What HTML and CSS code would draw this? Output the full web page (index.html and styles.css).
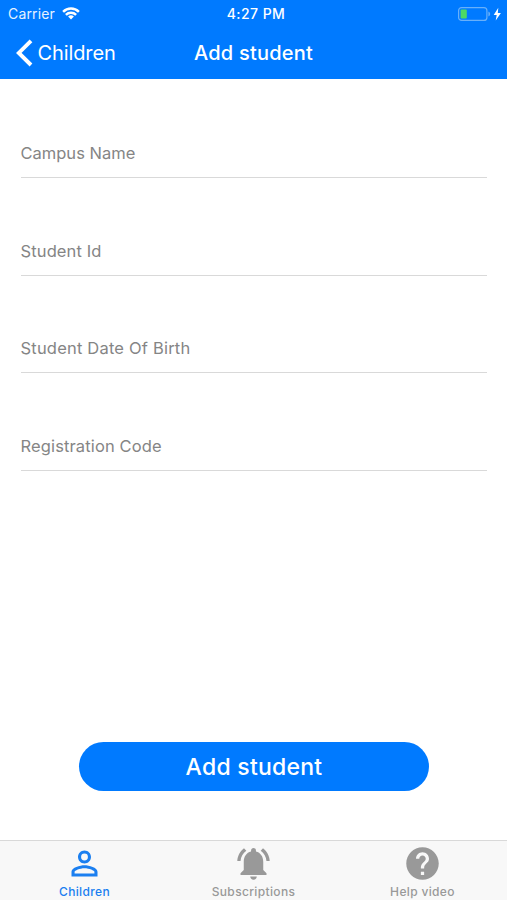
FILE: index.html
```html
<!DOCTYPE html>
<html lang="en">
<head>
<meta charset="utf-8">
<title>Add student</title>
<link rel="stylesheet" href="styles.css">
</head>
<body>
<div class="screen">
  <header class="top">
    <div class="status">
      <div class="status-left">
        <span class="carrier">Carrier</span>
        <svg class="wifi" viewBox="0 0 18 13"><g fill="none" stroke="#fff" stroke-width="2.5"><path d="M1.1 4.8a11.3 11.3 0 0 1 15.8 0"/><path d="M3.9 7.8a7.3 7.3 0 0 1 10.2 0"/></g><path d="M9 12.5L6.1 9.6a4.2 4.2 0 0 1 5.8 0z" fill="#fff"/></svg>
      </div>
      <span class="time">4:27 PM</span>
      <div class="status-right">
        <svg class="battery" viewBox="0 0 44 16"><rect x=".6" y="1.6" width="28.3" height="12.8" rx="3" fill="none" stroke="#68b0fa" stroke-width="1.2"/><rect x="2.6" y="3.4" width="6.2" height="9.2" rx="1" fill="#4cd964"/><path d="M30.4 5.5q1.8.6 1.8 2.5t-1.8 2.500z" fill="#68b0fa"/><path d="M40.3 1.800L35.700 9h3l-1 5.400 5.200-7.400h-3.100z" fill="#fff"/></svg>
      </div>
    </div>
    <nav class="navbar">
      <a class="back"><svg class="chevron" viewBox="0 0 17 28"><path d="M15 1.8L2.800 13.900 15 26" fill="none" stroke="#fff" stroke-width="3.900"/></svg><span>Children</span></a>
      <h1 class="title">Add student</h1>
    </nav>
  </header>
  <main class="form">
    <div class="field campus"><span>Campus Name</span></div>
    <div class="field"><span>Student Id</span></div>
    <div class="field birth"><span>Student Date Of Birth</span></div>
    <div class="field"><span>Registration Code</span></div>
    <button class="submit">Add student</button>
  </main>
  <footer class="tabs">
    <a class="tab active"><svg class="icon" viewBox="0 0 24 24"><path d="M12 5.9a2.1 2.1 0 1 1 0 4.2 2.1 2.1 0 0 1 0-4.2m0 9c2.97 0 6.1 1.46 6.1 2.1v1.1H5.900V17c0-.64 3.130-2.100 6.100-2.100M12 4C9.790 4 8 5.790 8 8s1.790 4 4 4 4-1.790 4-4-1.790-4-4-4zm0 9c-2.670 0-8 1.340-8 4v3h16v-3c0-2.660-5.330-4-8-4z"/></svg><span>Children</span></a>
    <a class="tab"><svg class="icon" viewBox="0 0 24 24"><path d="M7.58 4.08L6.15 2.65C3.75 4.48 2.17 7.3 2.03 10.5h2c.15-2.65 1.51-4.97 3.55-6.42zm12.39 6.42h2c-.15-3.2-1.73-6.02-4.12-7.85l-1.42 1.43c2.02 1.45 3.39 3.77 3.54 6.42zM18 11c0-3.07-1.64-5.64-4.5-6.32V4c0-.83-.67-1.5-1.5-1.5s-1.5.67-1.5 1.5v.68C7.63 5.36 6 7.92 6 11v5l-2 2v1h16v-1l-2-2v-5zm-6 11c.14 0 .27-.01.4-.04.65-.14 1.18-.58 1.44-1.18.1-.24.15-.5.15-.78h-4c.01 1.1.9 2 2.01 2z"/></svg><span>Subscriptions</span></a>
    <a class="tab"><svg class="icon" viewBox="0 0 24 24"><path d="M12 2C6.48 2 2 6.48 2 12s4.48 10 10 10 10-4.48 10-10S17.52 2 12 2zm1 17h-2v-2h2v2zm2.07-7.75l-.9.92C13.45 12.9 13 13.5 13 15h-2v-.5c0-1.1.45-2.1 1.17-2.83l1.24-1.26c.37-.36.59-.86.59-1.41 0-1.1-.9-2-2-2s-2 .9-2 2H8c0-2.21 1.79-4 4-4s4 1.79 4 4c0 .88-.36 1.68-.93 2.25z"/></svg><span>Help video</span></a>
  </footer>
</div>
</body>
</html>
```
FILE: styles.css
```css
* { box-sizing: border-box; }
body {
  margin: 0;
  background: #fff;
  font-family: Inter, "Liberation Sans", sans-serif;
}
.screen {
  height: 900px;
  display: flex;
  flex-direction: column;
  overflow: hidden;
}
.top {
  height: 79px;
  background: #007aff;
  color: #fff;
}
.status {
  height: 27px;
  padding: 0 5px 0 8px;
  display: grid;
  grid-template-columns: 1fr auto 1fr;
  align-items: center;
}
.status-left { display: flex; align-items: center; gap: 7px; }
.carrier { font-size: 14px; letter-spacing: 0.15px; opacity: .9; }
.wifi { width: 18px; height: 13px; }
.time { padding-left: 2px; font-size: 14px; font-weight: 500; letter-spacing: 0.45px; }
.status-right { display: flex; justify-content: flex-end; }
.battery { width: 44px; height: 16px; }
.navbar {
  height: 51px;
  padding: 0 16px;
  display: grid;
  grid-template-columns: 1fr auto 1fr;
  align-items: center;
}
.back {
  display: flex;
  align-items: center;
  gap: 4.5px;
  font-size: 20px;
  letter-spacing: -0.1px;
}
.chevron { width: 17px; height: 28px; }
.title { margin: 0; font-size: 20px; font-weight: 550; letter-spacing: 0.2px; }
.form {
  flex: 1;
  display: flex;
  flex-direction: column;
  padding: 1.4px 20px 0 20.5px;
}
.field {
  height: 97.7px;
  padding-bottom: 14px;
  border-bottom: 1.5px solid #d9d9d9;
  display: flex;
  align-items: flex-end;
  color: #858585;
  font-size: 16.5px;
  line-height: 20px;
  letter-spacing: 0.13px;
}
.campus { letter-spacing: 0; }
.birth { letter-spacing: 0.2px; }
.submit {
  width: 350px;
  height: 49px;
  margin: auto 0 49px 58.5px;
  padding: 1px 0 0;
  border: 0;
  border-radius: 25px;
  background: #007aff;
  color: #fff;
  font: 550 23px/48px Inter, "Liberation Sans", sans-serif;
  letter-spacing: 0.25px;
}
.tabs {
  height: 60px;
  border-top: 1px solid #d9d9d9;
  background: #f8f8f8;
  display: grid;
  grid-template-columns: repeat(3, 1fr);
}
.tab {
  display: flex;
  flex-direction: column;
  align-items: center;
  padding-top: 3px;
  color: #999;
  font-size: 12px;
  font-weight: 500;
  line-height: 16px;
  letter-spacing: 0.35px;
}
.active { color: #1b7ff0; }
.icon { width: 39px; height: 39px; margin-bottom: 1px; fill: currentColor; }
```
